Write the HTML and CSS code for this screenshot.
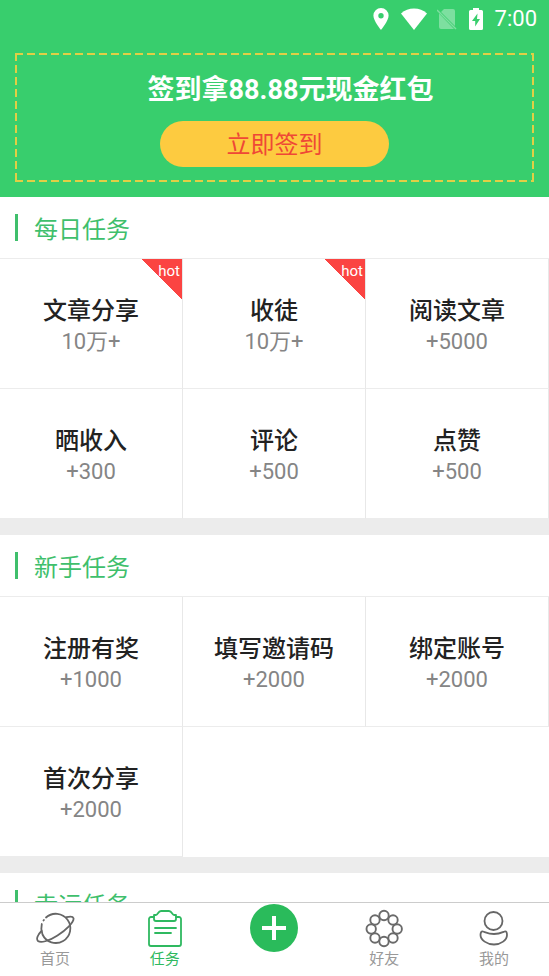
FILE: index.html
```html
<!DOCTYPE html>
<html lang="zh-CN">
<head>
<meta charset="utf-8">
<meta name="viewport" content="width=device-width, initial-scale=1">
<title>任务</title>
<link rel="stylesheet" href="styles.css">
</head>
<body>
<header class="hero">
  <div class="status">
    <svg class="pin" width="16" height="22" viewBox="0 0 16 22"><path fill="#fff" fill-rule="evenodd" d="M8 0a7.6 7.6 0 0 0-7.6 7.6C.4 13 8 22 8 22s7.600-9 7.600-14.400A7.600 7.600 0 0 0 8 0Zm0 5a2.700 2.700 0 1 1 0 5.400A2.700 2.700 0 0 1 8 5Z"/></svg>
    <svg class="wifi" width="26" height="22" viewBox="0 0 26 22"><path fill="#fff" d="M13 22 0 5.400Q5.500.5 13 .5t13 4.900Z"/></svg>
    <svg class="sim" width="20" height="22" viewBox="0 0 20 22"><path fill="#fff" opacity=".35" d="M7 1h9a2 2 0 0 1 2 2v15L4 4ZM2 5.500 17 21H4a2 2 0 0 1-2-2Z"/><path stroke="#fff" opacity=".35" stroke-width="1.500" d="m0 2 19 19"/></svg>
    <svg class="battery" width="14" height="22" viewBox="0 0 14 22"><path fill="#fff" fill-rule="evenodd" d="M4 0h6v2h2.500A1.500 1.500 0 0 1 14 3.500v17a1.500 1.500 0 0 1-1.500 1.500h-11A1.500 1.500 0 0 1 0 20.500v-17A1.500 1.500 0 0 1 1.500 2H4Zm4.500 5.500L3 13h3.200v5.500L11 11H8Z"/></svg>
    <time>7:00</time>
  </div>
  <div class="signin">
    <h1>签到拿88.88元现金红包</h1>
    <button type="button" class="signin-button">立即签到</button>
  </div>
</header>
<main>
  <section>
    <h2>每日任务</h2>
    <ul class="tasks">
      <li><b>文章分享</b><span>10万+</span><em class="hot">hot</em></li>
      <li><b>收徒</b><span>10万+</span><em class="hot">hot</em></li>
      <li><b>阅读文章</b><span>+5000</span></li>
      <li><b>晒收入</b><span>+300</span></li>
      <li><b>评论</b><span>+500</span></li>
      <li><b>点赞</b><span>+500</span></li>
    </ul>
  </section>
  <section>
    <h2>新手任务</h2>
    <ul class="tasks">
      <li><b>注册有奖</b><span>+1000</span></li>
      <li><b>填写邀请码</b><span>+2000</span></li>
      <li><b>绑定账号</b><span>+2000</span></li>
      <li><b>首次分享</b><span>+2000</span></li>
    </ul>
  </section>
  <section>
    <h2>幸运任务</h2>
  </section>
</main>
<nav class="tabs">
  <a href="#home">
    <svg width="40" height="40" viewBox="0 0 40 40" fill="none" stroke="#666" stroke-width="1.800" stroke-linecap="round"><path d="M11 8.500A14.600 14.600 0 1 1 7.500 25.500Q5.500 20 6.800 15M8.500 11.600l.4-.6"/><path d="M31.500 8.200c4-1 6.500-.7 7 1 .8 3.800-7 11.300-16 17.300S5.500 34 3 32c-2-2-.5-6 3.500-10"/></svg>
    <span>首页</span>
  </a>
  <a href="#tasks" class="active" aria-current="page">
    <svg width="40" height="40" viewBox="0 0 40 40" fill="none" stroke="#2fb960" stroke-width="1.800" stroke-linejoin="round" stroke-linecap="round"><path d="M9 8H6a2 2 0 0 0-2 2v25a2 2 0 0 0 2 2h28a2 2 0 0 0 2-2V10a2 2 0 0 0-2-2h-3"/><path d="M9 6h2c2 0 2-4 5-4h8c3 0 3 4 5 4h2v4a2 2 0 0 1-2 2H11a2 2 0 0 1-2-2ZM10 19h21M10 24h16"/></svg>
    <span>任务</span>
  </a>
  <a href="#add" class="add" aria-label="添加">
    <svg width="48" height="48" viewBox="0 0 48 48"><circle cx="24" cy="24" r="24" fill="#2abb5b"/><path d="M12 24h24M24 12v24" stroke="#fff" stroke-width="4"/></svg>
  </a>
  <a href="#friends">
    <svg width="40" height="40" viewBox="0 0 40 40" fill="none" stroke="#6a6a6a" stroke-width="1.900"><circle cx="20" cy="6.500" r="4.700"/><circle cx="29" cy="11" r="4.700"/><circle cx="33.200" cy="20" r="4.700"/><circle cx="29" cy="29" r="4.700"/><circle cx="20" cy="32.500" r="4.700"/><circle cx="11" cy="29" r="4.700"/><circle cx="7.200" cy="20" r="4.700"/><circle cx="11" cy="11" r="4.700"/></svg>
    <span>好友</span>
  </a>
  <a href="#me">
    <svg width="40" height="40" viewBox="0 0 40 40" fill="none" stroke="#666" stroke-width="1.800" stroke-linecap="round"><circle cx="19.500" cy="12" r="9"/><path d="M9 22.500c3 1 6 2.500 11 2.500s8-1.500 10.500-2.500c2-.8 2.500 1.500 2.500 3.500 0 5-6 9.500-13 9.500S6.500 31 6.500 26c0-2.500 1-4 2.500-3.500Z"/></svg>
    <span>我的</span>
  </a>
</nav>
</body>
</html>
```

FILE: styles.css
```css
* { box-sizing: border-box; }

html, body { height: 100%; }

body {
  margin: 0;
  display: flex;
  flex-direction: column;
  overflow: hidden;
  background: #fff;
  color: #222;
  font-family: Roboto, "Noto Sans CJK SC", sans-serif;
}

.hero {
  flex: none;
  padding: 0 15px 15px;
  background: #38ce6d;
  color: #fff;
}

.status {
  display: flex;
  justify-content: flex-end;
  align-items: center;
  gap: 12px;
  height: 38px;
  margin-right: -3px;
}

.status .sim { margin-left: -2px; }

.status time {
  font-size: 22px;
  line-height: 40px;
}

.signin {
  --dash: #e0cf45;
  margin-top: 15px;
  padding: 16px 0 15px;
  display: flex;
  flex-direction: column;
  align-items: center;
  gap: 10px;
  background:
    repeating-linear-gradient(90deg, var(--dash) 0 8px, transparent 8px 12px) 0 0 / 100% 2px no-repeat,
    repeating-linear-gradient(90deg, var(--dash) 0 8px, transparent 8px 12px) 0 100% / 100% 2px no-repeat,
    repeating-linear-gradient(180deg, var(--dash) 0 8px, transparent 8px 12px) 0 0 / 2px 100% no-repeat,
    repeating-linear-gradient(180deg, var(--dash) 0 8px, transparent 8px 12px) 100% 0 / 2px 100% no-repeat;
}

h1 {
  margin: 0 0 0 32px;
  font-size: 27px;
  line-height: 42px;
  font-weight: 700;
}

.signin-button {
  width: 44%;
  height: 46px;
  padding: 2px 0 0;
  border: 0;
  border-radius: 23px;
  background: #fdcb40;
  color: #ef4836;
  font: 24px/44px Roboto, "Noto Sans CJK SC", sans-serif;
}

main {
  flex: 1;
  min-height: 0;
  overflow: hidden;
}

section + section { border-top: 16px solid #ececec; }

h2 {
  display: flex;
  align-items: center;
  gap: 16px;
  margin: 0;
  padding-left: 15px;
  height: 61px;
  color: #3fbf6c;
  font-size: 24px;
  font-weight: 400;
}

h2::before {
  content: "";
  width: 3px;
  height: 27px;
  background: #3fbf6c;
}

.tasks {
  display: grid;
  grid-template-columns: repeat(3, 1fr);
  margin: 0;
  padding: 0;
  border-top: 1px solid #ececec;
  list-style: none;
}

.tasks li {
  position: relative;
  display: flex;
  flex-direction: column;
  align-items: center;
  height: 130px;
  padding-top: 36px;
  border-right: 1px solid #e8e8e8;
  border-bottom: 1px solid #ececec;
}

.tasks b {
  font-size: 24px;
  line-height: 32px;
  font-weight: 500;
}

.tasks span {
  color: #858585;
  font-size: 22px;
  line-height: 30px;
}

.hot {
  position: absolute;
  top: 0;
  right: 0;
  width: 40px;
  height: 40px;
  padding-right: 2px;
  background: linear-gradient(to top right, transparent 50%, #fb4442 50%);
  color: #fff;
  font-size: 15px;
  line-height: 24px;
  font-style: normal;
  text-align: right;
}

.tabs {
  flex: none;
  display: grid;
  grid-template-columns: repeat(5, 1fr);
  height: 74px;
  border-top: 1px solid #ccc;
  background: #fff;
}

.tabs a {
  display: flex;
  flex-direction: column;
  align-items: center;
  padding-top: 6px;
  color: #999;
  font-size: 15px;
  line-height: 20px;
  text-decoration: none;
}

.tabs .active { color: #2fb960; }

.tabs .add { padding-top: 1px; }
```
